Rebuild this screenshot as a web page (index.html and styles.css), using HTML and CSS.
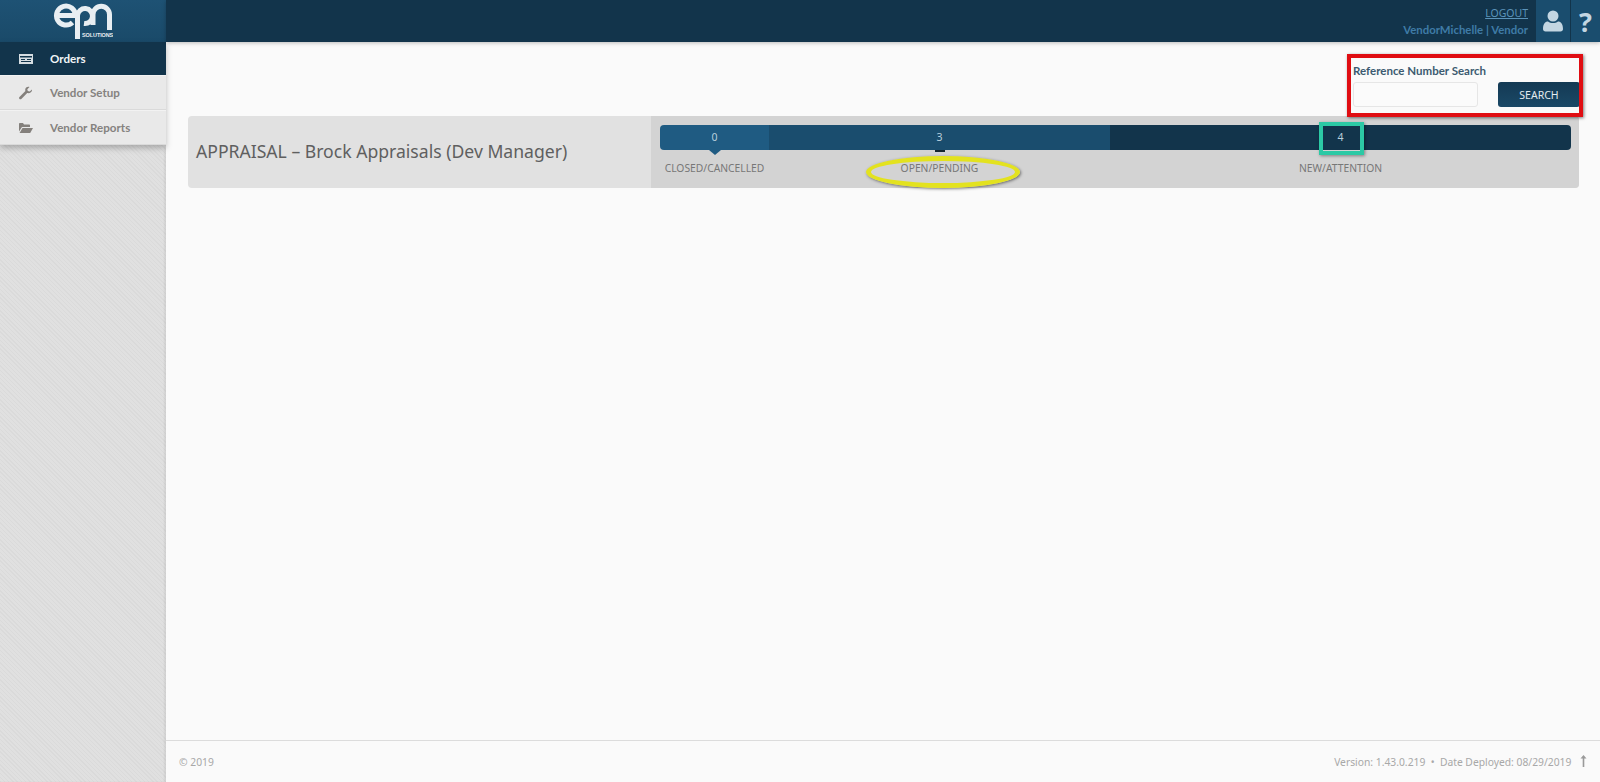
FILE: index.html
```html
<!DOCTYPE html>
<html>
<head>
    <link rel="stylesheet" href="styles.css">
</head>
<body>
    <div class="app">
        <aside class="sidebar">
            <div class="logo">
                <svg width="60" height="40" viewBox="0 0 60 40">
                    <g fill="none" stroke="#e8eef2" stroke-width="5">
                        <path d="M4 14.500 H22.500 A9.500 9.500 0 1 0 19.500 21.500"/>
                        <path d="M24.500 38 V14.500 A7.500 7.500 0 1 1 31 22.500"/>
                        <path d="M40 24 V13.500 A8 8 0 0 1 56.500 13.500 V29"/>
                    </g>
                    <text x="29" y="36" class="logo-sub">SOLUTIONS</text>
                </svg>
            </div>
            <nav class="menu">
                <a class="menu-item active">
                    <svg class="menu-icon" width="14" height="12" viewBox="0 0 14 12"><path fill="#d5dde2" d="M0 1h14v10H0z"/><path fill="#12344b" d="M1 3h12v1.500H1zM2 6h4v1H2zM8 6h4v1H8zM2 8h10v1H2z"/></svg>
                    Orders
                </a>
                <a class="menu-item">
                    <svg class="menu-icon" width="14" height="14" viewBox="0 0 14 14"><path fill="#84807c" d="M13 3.500 10.700 5.500 8.800 5 8.300 3.200 10.500 1C8.500.300 6.300 1.500 6.200 3.700c0 .6.100 1 .2 1.400L.7 10.800c-.8.800-.8 1.500-.2 2.100.6.600 1.300.6 2.100-.2l5.600-5.700c2.600.8 5.200-1.500 4.800-3.500z"/></svg>
                    Vendor Setup
                </a>
                <a class="menu-item">
                    <svg class="menu-icon" width="14" height="12" viewBox="0 0 14 12"><path fill="#84807c" d="M0 2c0-.6.400-1 1-1h3l1 1.500h5c.6 0 1 .4 1 1V5H3L0 9.500z"/><path fill="#84807c" d="M3.500 6H14l-2.800 5H.6z"/></svg>
                    Vendor Reports
                </a>
            </nav>
        </aside>
        <div class="main">
            <header class="topbar">
                <div class="user-info">
                    <a class="logout">LOGOUT</a>
                    <div class="user-name">VendorMichelle | Vendor</div>
                </div>
                <div class="tile">
                    <svg width="20" height="22" viewBox="0 0 20 22"><circle cx="10" cy="6" r="5.500" fill="#c3d6e2"/><path fill="#c3d6e2" d="M0 19c0-6 3-7.500 5-7.500 1.500 1 3 1.500 5 1.500s3.500-.5 5-1.500c2 0 5 1.500 5 7.500 0 1.500-1 2.500-2.500 2.500h-15C1 21.500 0 20.500 0 19z"/></svg>
                </div>
                <div class="tile tile-help">?</div>
            </header>
            <main class="content">
                <form class="search">
                    <label class="search-label">Reference Number Search</label>
                    <div class="search-row">
                        <input class="search-input" type="text">
                        <button class="search-btn" type="button">SEARCH</button>
                    </div>
                </form>
                <section class="product">
                    <h2 class="product-name">APPRAISAL – Brock Appraisals (Dev Manager)</h2>
                    <div class="status">
                        <div class="status-bar">
                            <div class="seg seg-closed">0</div>
                            <div class="seg seg-open">3</div>
                            <div class="seg seg-new">4</div>
                        </div>
                        <div class="status-labels">
                            <div class="lbl">CLOSED/CANCELLED</div>
                            <div class="lbl">OPEN/PENDING</div>
                            <div class="lbl">NEW/ATTENTION</div>
                        </div>
                    </div>
                </section>
            </main>
            <footer class="footer">
                <span>© 2019</span>
                <span class="footer-right">Version: 1.43.0.219 &nbsp;•&nbsp; Date Deployed: 08/29/2019
                    <svg class="up-arrow" width="7" height="12" viewBox="0 0 7 12"><path fill="#9a9a9a" d="M3.500 0 6.500 3.500H4.300V12H2.700V3.500H.5z"/></svg>
                </span>
            </footer>
        </div>
    </div>

    <!-- markup drawn on top of the screenshot -->
    <div class="mark mark-red"></div>
    <div class="mark mark-yellow"></div>
    <div class="mark mark-teal"></div>
</body>
</html>
```

FILE: styles.css
```css
:root {
    --navy: #12344b;
    --blue: #1a4d6e;
    --blue-light: #1f5b82;
    --grey-text: #777;
}

* {
    box-sizing: border-box;
}

html, body {
    height: 100%;
}

body {
    margin: 0;
    font-family: "Noto Sans", "Open Sans", sans-serif;
    background: #fafafa;
    overflow: hidden;
}

.app {
    display: flex;
    height: 782px;
}

/* sidebar */
.sidebar {
    width: 166px;
    flex-shrink: 0;
    background: repeating-linear-gradient(45deg, #dadada 0, #dadada 1px, #e0e0e0 1px, #e0e0e0 3px);
    box-shadow: inset -2px 0 2px rgba(0, 0, 0, 0.06);
}

.logo {
    height: 42px;
    background: linear-gradient(#1e5274, #1a4a69);
    display: flex;
    justify-content: center;
    align-items: center;
}

.logo-sub {
    font-size: 5.500px;
    font-weight: 700;
    fill: #e8eef2;
    font-family: "Liberation Sans", sans-serif;
    letter-spacing: -0.1px;
}

.menu {
    box-shadow: 0 3px 6px rgba(0, 0, 0, 0.25);
    background: #e9e9e9;
}

.menu-item {
    display: flex;
    align-items: center;
    height: 35px;
    padding-left: 19px;
    font-family: Lato, sans-serif;
    font-size: 11.600px;
    font-weight: 700;
    color: #85827f;
    border-bottom: 1px solid #dadada;
    border-top: 1px solid #f2f2f2;
}

.menu-item.active {
    height: 33px;
    background: var(--navy);
    color: #f1f4f6;
    border: 0;
}

.menu-icon {
    margin-right: 17px;
    width: 14px;
}

/* header */
.main {
    flex: 1;
    display: flex;
    flex-direction: column;
    min-width: 0;
}

.topbar {
    height: 42px;
    background: var(--navy);
    display: flex;
    justify-content: flex-end;
    box-shadow: 0 1px 4px rgba(0, 0, 0, 0.25);
}

.user-info {
    text-align: right;
    padding: 5px 8px 0 0;
}

.logout {
    display: block;
    color: #5b93b9;
    font-size: 10.500px;
    line-height: 16px;
    text-decoration: underline;
}

.user-name {
    color: #3f7ba6;
    font-family: Lato, sans-serif;
    font-weight: 700;
    font-size: 11.400px;
    line-height: 16px;
    margin-top: 1px;
}

.tile {
    width: 34px;
    height: 42px;
    background: var(--blue);
    display: flex;
    align-items: center;
    justify-content: center;
}

.tile-help {
    width: 29px;
    margin-left: 1px;
    color: #c3d6e2;
    font-size: 27px;
    font-weight: 700;
}

/* content */
.content {
    flex: 1;
    padding: 21px 21px 0 22px;
    display: flex;
    flex-direction: column;
}

.search {
    align-self: flex-end;
    width: 227px;
    height: 53px;
    margin-right: -1px;
}

.search-label {
    display: block;
    font-family: Lato, sans-serif;
    font-size: 11.500px;
    font-weight: 700;
    line-height: 16px;
    color: #3c5a70;
}

.search-row {
    display: flex;
    justify-content: space-between;
    margin-top: 3px;
}

.search-input {
    width: 125px;
    height: 25px;
    border: 1px solid #e6e6e6;
    border-radius: 3px;
    background: #fbfbfb;
}

.search-btn {
    width: 82px;
    height: 25px;
    border: 0;
    border-radius: 3px;
    background: linear-gradient(#143a54, #1a4866);
    color: #e4ebef;
    font-family: inherit;
    font-size: 10.500px;
    padding: 0;
}

.product {
    display: flex;
    height: 72px;
    background: #e1e1e1;
    border-radius: 4px;
    overflow: hidden;
}

.product-name {
    width: 463px;
    margin: 0;
    padding: 0 0 0 8px;
    font-size: 17.600px;
    font-weight: 400;
    line-height: 71px;
    color: #5f5f5f;
    white-space: nowrap;
}

.status {
    flex: 1;
    background: #d3d3d3;
    padding: 9px 8px 0 9px;
}

.status-bar {
    display: grid;
    grid-template-columns: 109px 341px 1fr;
    height: 25px;
    border-radius: 4px;
}

.seg {
    position: relative;
    text-align: center;
    font-size: 10.500px;
    line-height: 25px;
    color: #b9cfdd;
}

.seg-closed {
    background: var(--blue-light);
    border-radius: 4px 0 0 4px;
}

.seg-closed::after {
    content: "";
    position: absolute;
    left: 50%;
    top: 25px;
    margin-left: -6px;
    border: 6px solid transparent;
    border-top: 5px solid var(--blue-light);
    border-bottom: 0;
}

.seg-open {
    background: var(--blue);
}

.seg-open::after {
    content: "";
    position: absolute;
    left: 50%;
    top: 25px;
    margin-left: -5px;
    width: 10px;
    height: 2px;
    background: #14252f;
}

.seg-new {
    background: var(--navy);
    border-radius: 0 4px 4px 0;
}

.status-labels {
    height: 30px;
    font-size: 10.300px;
    color: var(--grey-text);
    display: grid;
    grid-template-columns: 109px 341px 1fr;
    margin-top: 10px;
}

.lbl {
    text-align: center;
    white-space: nowrap;
    line-height: 17px;
}

/* footer */
.footer {
    height: 42px;
    border-top: 1px solid #dcdcdc;
    display: flex;
    justify-content: space-between;
    align-items: center;
    padding: 0 13px;
    font-size: 10.300px;
    color: #a8a8a8;
}

.up-arrow {
    margin-left: 6px;
    vertical-align: -1px;
}

/* annotations */
.mark {
    position: absolute;
    pointer-events: none;
}

.mark-red {
    left: 1347px;
    top: 54px;
    width: 236px;
    height: 63px;
    border: 4px solid #e00d12;
    box-shadow: 1px 1px 3px rgba(0, 0, 0, 0.5);
}

.mark-yellow {
    left: 866px;
    top: 156px;
    width: 154px;
    height: 32px;
    border: 5px solid #e3e21f;
    border-radius: 50%;
    box-shadow: 1px 1px 3px rgba(0, 0, 0, 0.5);
}

.mark-teal {
    left: 1319px;
    top: 122px;
    width: 45px;
    height: 33px;
    border: 4px solid #2cc9a5;
    box-shadow: 1px 1px 3px rgba(0, 0, 0, 0.4);
}
```
